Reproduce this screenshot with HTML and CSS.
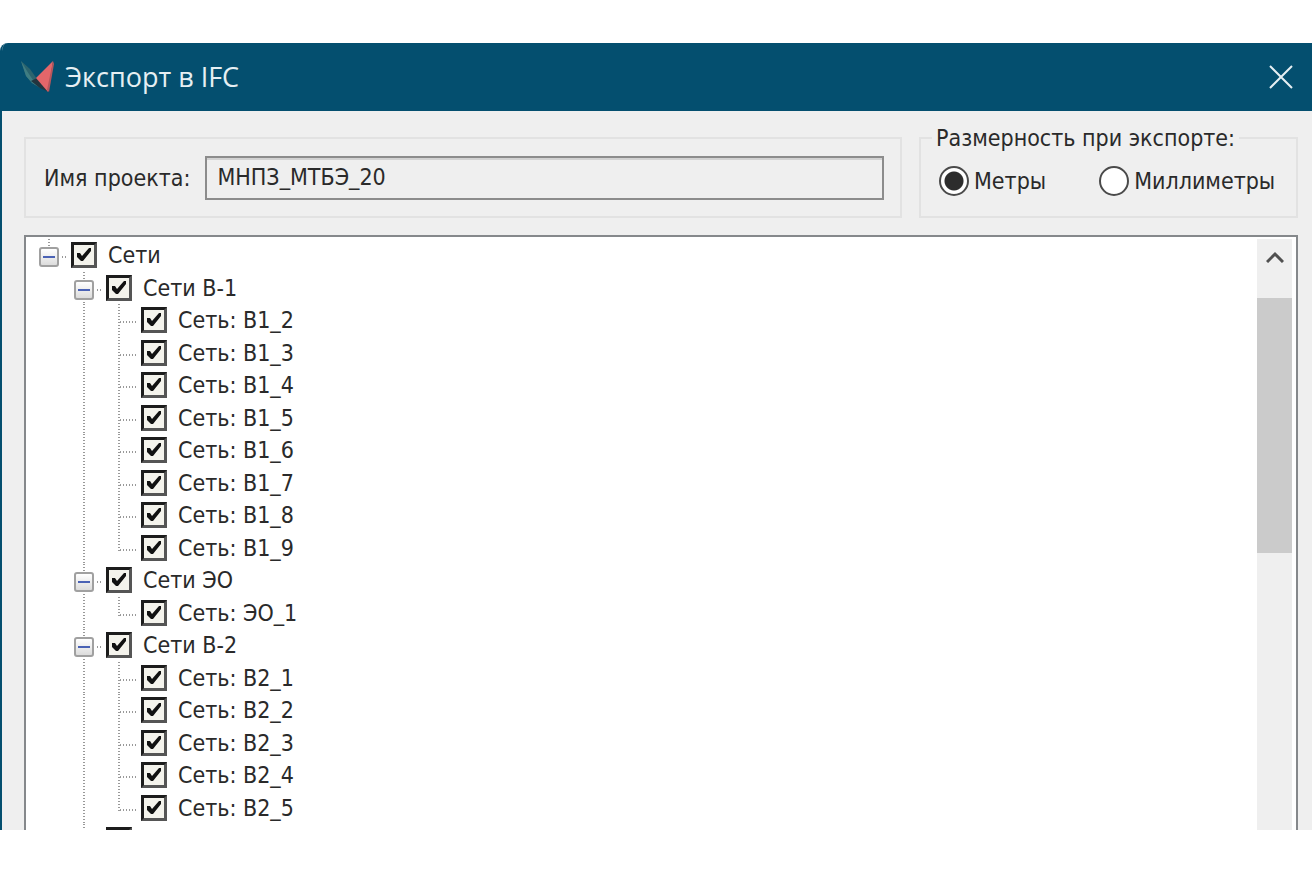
FILE: index.html
```
<!DOCTYPE html>
<html lang="ru">
<head>
<meta charset="UTF-8" />
<meta name="viewport" content="width=device-width, initial-scale=1.0"/>
<title>Экспорт в IFC</title>
<link rel="stylesheet" href="styles.css">
</head>
<body>
<div class="window">
<header class="titlebar">
<svg class="logo" width="34" height="32" viewBox="0 0 34 32" aria-hidden="true">
<path d="M0 0 L9 8 L16 18 L19 27 L11 22 L5 15 Z" fill="#2c646e"/>
<path d="M0 0 L6 10 L16 25 L11 22 L5 15 Z" fill="#3f7d82"/>
<path d="M10 20 L16 17 L28 31 L19 27 Z" fill="#22353f"/>
<path d="M32 0 L15 17 L27 31 Z" fill="#e4666a"/>
<path d="M32 0 L33 3 L28 31 L26 29 Z" fill="#b8565c"/>
</svg>
<h1 class="title">Экспорт в IFC</h1>
<button class="close" type="button" aria-label="Закрыть">
<svg width="24" height="24" viewBox="0 0 24 24"><path d="M1 1 L23 23 M23 1 L1 23" stroke="#e6eff3" stroke-width="2" fill="none"/></svg>
</button>
</header>
<main class="content">
<div class="options">
<div class="group project">
<label for="project">Имя проекта:</label>
<input class="project-name" id="project" type="text" value="МНПЗ_МТБЭ_20" readonly>
</div>
<fieldset class="group units">
<legend>Размерность при экспорте:</legend>
<div class="radios">
<label><input type="radio" name="units" checked>Метры</label>
<label><input type="radio" name="units">Миллиметры</label>
</div>
</fieldset>
</div>
<div class="tree">
<ul class="rows">
<li><span class="guide root"><button class="toggle" type="button" aria-label="Свернуть"></button></span><label><input type="checkbox" checked>Сети</label></li>
<li><span class="guide"></span><span class="guide node"><button class="toggle" type="button" aria-label="Свернуть"></button></span><label><input type="checkbox" checked>Сети В-1</label></li>
<li><span class="guide"></span><span class="guide line"></span><span class="guide tee"></span><label><input type="checkbox" checked>Сеть: В1_2</label></li>
<li><span class="guide"></span><span class="guide line"></span><span class="guide tee"></span><label><input type="checkbox" checked>Сеть: В1_3</label></li>
<li><span class="guide"></span><span class="guide line"></span><span class="guide tee"></span><label><input type="checkbox" checked>Сеть: В1_4</label></li>
<li><span class="guide"></span><span class="guide line"></span><span class="guide tee"></span><label><input type="checkbox" checked>Сеть: В1_5</label></li>
<li><span class="guide"></span><span class="guide line"></span><span class="guide tee"></span><label><input type="checkbox" checked>Сеть: В1_6</label></li>
<li><span class="guide"></span><span class="guide line"></span><span class="guide tee"></span><label><input type="checkbox" checked>Сеть: В1_7</label></li>
<li><span class="guide"></span><span class="guide line"></span><span class="guide tee"></span><label><input type="checkbox" checked>Сеть: В1_8</label></li>
<li><span class="guide"></span><span class="guide line"></span><span class="guide last"></span><label><input type="checkbox" checked>Сеть: В1_9</label></li>
<li><span class="guide"></span><span class="guide node"><button class="toggle" type="button" aria-label="Свернуть"></button></span><label><input type="checkbox" checked>Сети ЭО</label></li>
<li><span class="guide"></span><span class="guide line"></span><span class="guide last"></span><label><input type="checkbox" checked>Сеть: ЭО_1</label></li>
<li><span class="guide"></span><span class="guide node"><button class="toggle" type="button" aria-label="Свернуть"></button></span><label><input type="checkbox" checked>Сети В-2</label></li>
<li><span class="guide"></span><span class="guide line"></span><span class="guide tee"></span><label><input type="checkbox" checked>Сеть: В2_1</label></li>
<li><span class="guide"></span><span class="guide line"></span><span class="guide tee"></span><label><input type="checkbox" checked>Сеть: В2_2</label></li>
<li><span class="guide"></span><span class="guide line"></span><span class="guide tee"></span><label><input type="checkbox" checked>Сеть: В2_3</label></li>
<li><span class="guide"></span><span class="guide line"></span><span class="guide tee"></span><label><input type="checkbox" checked>Сеть: В2_4</label></li>
<li><span class="guide"></span><span class="guide line"></span><span class="guide last"></span><label><input type="checkbox" checked>Сеть: В2_5</label></li>
<li><span class="guide"></span><span class="guide line"></span><input type="checkbox" checked aria-label="Сети"></li>
</ul>
<div class="scrollbar">
<button class="scroll-up" type="button" aria-label="Вверх">
<svg width="18" height="12" viewBox="0 0 18 12"><path d="M1 11 L9 3 L17 11" stroke="#505050" stroke-width="3" fill="none"/></svg>
</button>
<div class="thumb"></div>
</div>
</div>
</main>
</div>
</body>
</html>
```
FILE: styles.css
```
* {
  box-sizing: border-box;
}
body {
  margin: 0;
  padding: 43px 0 42px;
  height: 100vh;
  background: #fff;
  color: #2a2a2a;
  font: 23px/26px "DejaVu Sans Condensed", Tahoma, sans-serif;
}
button {
  padding: 0;
  border: none;
  background: none;
}
.window {
  display: flex;
  flex-direction: column;
  height: 100%;
  overflow: hidden;
  border-left: 2px solid #044f6f;
  border-top-left-radius: 8px;
  background: #efefef;
}
.titlebar {
  display: flex;
  align-items: center;
  flex: none;
  height: 68px;
  padding: 0 19px;
  background: #044f6f;
}
.title {
  flex: 1;
  margin: 0 0 0 10px;
  color: #e6eff3;
  font: 27px/36px "Open Sans", "Segoe UI", sans-serif;
}
.close {
  display: flex;
}
.content {
  display: flex;
  flex-direction: column;
  flex: 1;
  min-height: 0;
  padding: 14px 14px 0 22px;
}
.options {
  display: flex;
  align-items: flex-end;
  gap: 17px;
  margin-bottom: 17px;
}
.group {
  border: 2px solid #e2e2e2;
}
.project {
  display: flex;
  align-items: center;
  flex: 1;
  gap: 15px;
  height: 81px;
  padding: 0 16px 0 18px;
}
.project-name {
  flex: 1;
  min-width: 0;
  height: 44px;
  padding: 0 10px 2px;
  border: 2px solid #8c8c8c;
  background: #efefef;
  box-shadow: inset 0 2px #d2d2d2;
  color: inherit;
  font: inherit;
}
.units {
  width: 379px;
  height: 93px;
  margin: 0;
  padding: 0 18px;
}
.units legend {
  margin-left: -7px;
  padding: 0 4px;
}
.radios {
  display: flex;
  gap: 53px;
  padding-top: 15px;
}
.radios label {
  display: flex;
  align-items: center;
  gap: 5px;
}
.radios input {
  appearance: none;
  flex: none;
  width: 30px;
  height: 30px;
  margin: 0;
  border: 2px solid #4a4a4a;
  border-radius: 50%;
  background: #fff;
}
.radios input:checked {
  background: radial-gradient(circle, #2d2d2d 9px, #fff 10px);
}
.tree {
  display: flex;
  flex: 1;
  min-height: 0;
  padding: 2px 4px 0 0;
  border: 2px solid #85888b;
  border-bottom: none;
  background: #fff;
}
.rows {
  flex: 1;
  overflow: hidden;
  margin: 0;
  padding: 0 0 0 6px;
  list-style: none;
}
.rows li {
  display: flex;
  height: 33px;
}
.rows li:nth-child(even) {
  height: 32px;
}
.rows label {
  display: flex;
  line-height: 33px;
}
.rows input {
  appearance: none;
  flex: none;
  width: 26px;
  height: 26px;
  margin: 3px 11px 0 4px;
  border: 3px solid #1c1c1c;
  border-right-color: #555;
  border-bottom-color: #555;
  background: #f4f3ec;
}
.rows input:checked::before {
  content: "";
  display: block;
  width: 20px;
  height: 20px;
  background: #111;
  clip-path: polygon(3px 8px, 6px 8px, 8px 11px, 15px 3px, 17px 3px, 17px 6px, 9px 16px, 7px 16px, 3px 12px);
}
/* dotted connectors between the nodes */
.guide {
  position: relative;
  flex: none;
  width: 35px;
}
.line::before,
.tee::before,
.last::before,
.node::before,
.root::before {
  content: "";
  position: absolute;
  top: 0;
  bottom: 0;
  left: 16px;
  width: 2px;
  background: repeating-linear-gradient(#999 0 1px, #fff 1px 3px);
}
.last::before,
.root::before {
  bottom: auto;
  height: 19px;
}
.tee::after,
.last::after,
.node::after,
.root::after {
  content: "";
  position: absolute;
  top: 17px;
  left: 18px;
  right: 0;
  height: 2px;
  background: repeating-linear-gradient(90deg, #999 0 1px, #fff 1px 3px);
}
.node::after,
.root::after {
  left: 30px;
}
.toggle {
  position: relative;
  z-index: 1;
  display: block;
  width: 20px;
  height: 20px;
  margin: 8px 0 0 7px;
  border: 2px solid #a0a0a0;
  border-radius: 3px;
  background: linear-gradient(#fff, #dcdcdc);
}
.toggle::before {
  content: "";
  display: block;
  width: 12px;
  height: 2px;
  margin: 0 auto;
  background: #4a62b5;
}
.scrollbar {
  width: 35px;
  background: #efefef;
}
.scroll-up {
  display: flex;
  align-items: center;
  justify-content: center;
  width: 100%;
  height: 36px;
}
.thumb {
  height: 255px;
  margin-top: 23px;
  background: #cbcbcb;
}
```
